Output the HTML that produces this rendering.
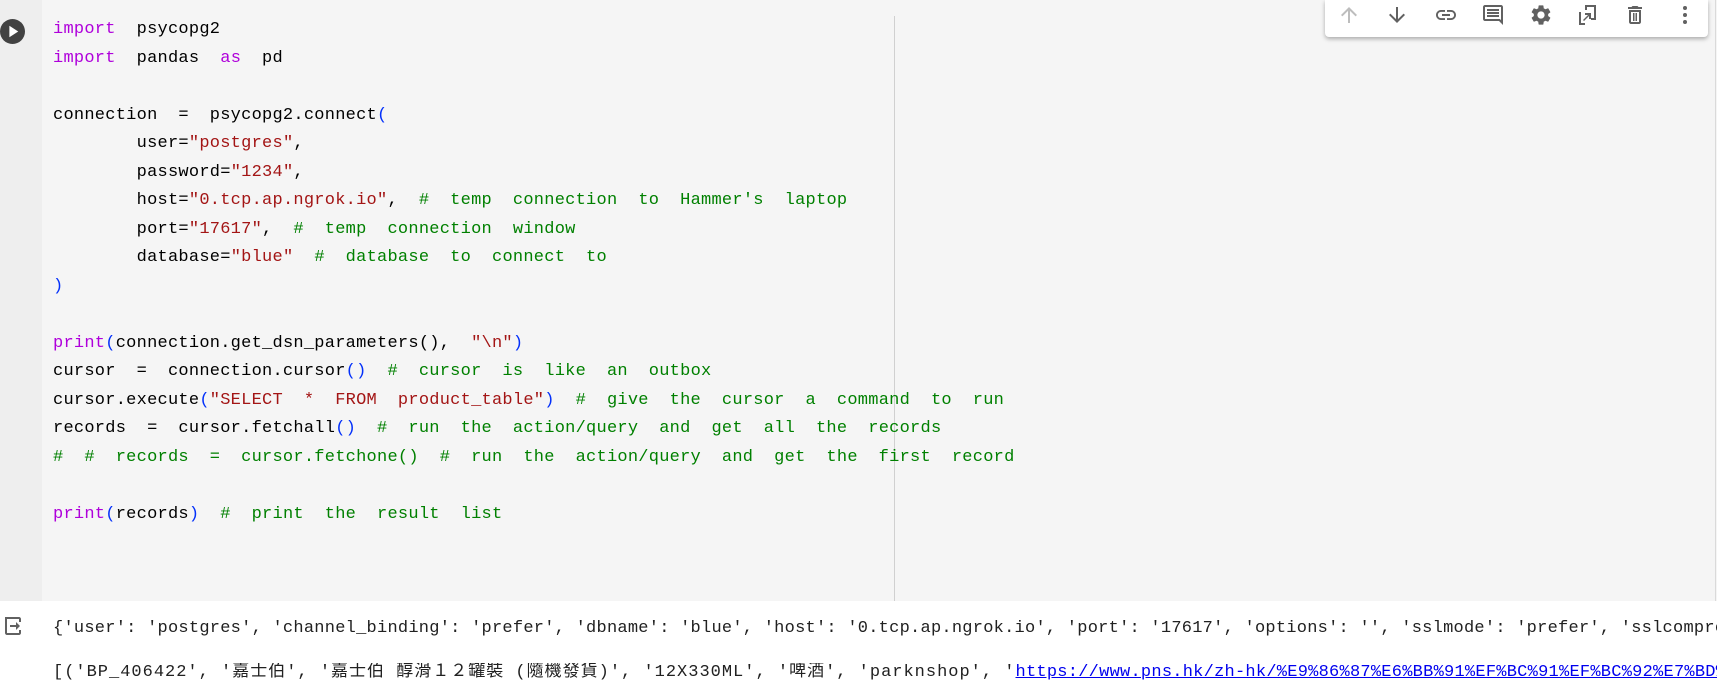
<!DOCTYPE html>
<html><head><meta charset="utf-8"><style>
html,body{margin:0;padding:0;width:1717px;height:690px;overflow:hidden;background:#fff;position:relative}
.cell{position:absolute;left:0;top:0;width:1717px;height:601px;background:#f5f5f5}
.gut{position:absolute;left:0;top:0;width:42px;height:601px;background:#eeeeee}
.vl{position:absolute;left:894px;top:16px;width:1px;height:585px;background:#d0d0d0}
.rb{position:absolute;left:1715px;top:0;width:1px;height:601px;background:#dadada}
pre{margin:0;position:absolute;font-family:"Liberation Mono","Noto Sans CJK TC",monospace;font-size:17px;letter-spacing:0.25px;white-space:pre;color:#000}
.code{left:53px;top:16px;line-height:28.5px}
.k{color:#af00db}.s{color:#a31515}.c{color:#008000}.p{color:#0431fa}
.tb{position:absolute;left:1325px;top:0;width:383px;height:37px;background:#fff;border-radius:0 0 4px 4px;box-shadow:0 2px 4px rgba(0,0,0,.3)}
.tb svg{position:absolute;top:3px;width:24px;height:24px;fill:#616161}
.out{left:53px;color:#212121;line-height:20px;width:1664px;overflow:hidden}
a{color:#0000ee;text-decoration:underline}
.wide{letter-spacing:1px}
</style></head><body>
<div class="cell"></div><div class="gut"></div><div class="vl"></div><div class="rb"></div>
<svg style="position:absolute;left:0;top:19px" width="25" height="25" viewBox="0 0 24 24"><circle cx="12" cy="12" r="12" fill="#424242"/><path d="M9 6.5v11l8.5-5.5z" fill="#fff"/></svg>
<pre class="code"><span class="k">import</span>  psycopg2
<span class="k">import</span>  pandas  <span class="k">as</span>  pd

connection  =  psycopg2.connect<span class="p">(</span>
        user=<span class="s">"postgres"</span>,
        password=<span class="s">"1234"</span>,
        host=<span class="s">"0.tcp.ap.ngrok.io"</span>,  <span class="c">#  temp  connection  to  Hammer's  laptop</span>
        port=<span class="s">"17617"</span>,  <span class="c">#  temp  connection  window</span>
        database=<span class="s">"blue"</span>  <span class="c">#  database  to  connect  to</span>
<span class="p">)</span>

<span class="k">print</span><span class="p">(</span>connection.get_dsn_parameters(),  <span class="s">"\n"</span><span class="p">)</span>
cursor  =  connection.cursor<span class="p">()</span>  <span class="c">#  cursor  is  like  an  outbox</span>
cursor.execute<span class="p">(</span><span class="s">"SELECT  *  FROM  product_table"</span><span class="p">)</span>  <span class="c">#  give  the  cursor  a  command  to  run</span>
records  =  cursor.fetchall<span class="p">()</span>  <span class="c">#  run  the  action/query  and  get  all  the  records</span>
<span class="c">#  #  records  =  cursor.fetchone()  #  run  the  action/query  and  get  the  first  record</span>

<span class="k">print</span><span class="p">(</span>records<span class="p">)</span>  <span class="c">#  print  the  result  list</span></pre>
<div class="tb">
<svg style="left:12px" viewBox="0 0 24 24"><path fill="#bdbdbd" d="M4 12l1.41 1.41L11 7.83V20h2V7.83l5.58 5.59L20 12l-8-8-8 8z"/></svg>
<svg style="left:60px" viewBox="0 0 24 24"><path d="M20 12l-1.41-1.41L13 16.17V4h-2v12.17l-5.58-5.59L4 12l8 8 8-8z"/></svg>
<svg style="left:109px" viewBox="0 0 24 24"><path d="M3.9 12c0-1.710 1.39-3.1 3.1-3.1h4V7H7c-2.76 0-5 2.24-5 5s2.24 5 5 5h4v-1.9H7c-1.71 0-3.1-1.39-3.1-3.1zM8 13h8v-2H8v2zm9-6h-4v1.9h4c1.71 0 3.1 1.39 3.1 3.1s-1.39 3.1-3.1 3.1h-4V17h4c2.76 0 5-2.24 5-5s-2.24-5-5-5z"/></svg>
<svg style="left:156px" viewBox="0 0 24 24"><path d="M21.99 4c0-1.1-.89-2-1.99-2H4c-1.1 0-2 .9-2 2v12c0 1.1.9 2 2 2h14l4 4-.01-18zM20 4v13.17L18.83 16H4V4h16zM6 12h12v2H6zm0-3h12v2H6zm0-3h12v2H6z"/></svg>
<svg style="left:204px" viewBox="0 0 24 24"><path d="M19.14 12.94c.04-.3.06-.61.06-.94 0-.32-.02-.64-.07-.94l2.03-1.58a.49.49 0 00.12-.61l-1.92-3.32a.488.488 0 00-.59-.22l-2.39.96c-.5-.38-1.03-.7-1.62-.94l-.36-2.54a.484.484 0 00-.48-.41h-3.84c-.24 0-.43.17-.47.41l-.36 2.54c-.59.24-1.13.57-1.62.94l-2.39-.96c-.22-.08-.47 0-.59.22L2.74 8.87c-.12.21-.08.47.12.61l2.03 1.58c-.05.3-.09.63-.09.94s.02.64.07.94l-2.03 1.58a.49.49 0 00-.12.61l1.92 3.32c.12.22.37.29.59.22l2.39-.96c.5.38 1.03.7 1.62.94l.36 2.54c.05.24.24.41.48.41h3.84c.24 0 .44-.17.47-.41l.36-2.54c.59-.24 1.13-.56 1.62-.94l2.39.96c.22.08.47 0 .59-.22l1.92-3.32c.12-.22.07-.47-.12-.61l-2.01-1.58zM12 15.6c-1.98 0-3.6-1.62-3.6-3.6s1.62-3.6 3.6-3.6 3.6 1.62 3.6 3.6-1.62 3.6-3.6 3.6z"/></svg>
<svg style="left:251px" viewBox="0 0 24 24"><path d="M9 2h11v15h-5v-2h3V4h-7v3H9zM3 9h2v11h4v2H3zM7 17l5-5h-3v-2h6v6h-2v-3l-5 5z"/></svg>
<svg style="left:298px" viewBox="0 0 24 24"><path d="M6 19c0 1.1.9 2 2 2h8c1.1 0 2-.9 2-2V7H6v12zm2-10h8v10H8V9zm7.5-5l-1-1h-5l-1 1H5v2h14V4zM10 10h1.5v8H10zm2.5 0H14v8h-1.5z"/></svg>
<svg style="left:348px" viewBox="0 0 24 24"><circle cx="12" cy="5" r="2"/><circle cx="12" cy="12" r="2"/><circle cx="12" cy="19" r="2"/></svg>
</div>
<svg style="position:absolute;left:2px;top:614px" width="24" height="24" viewBox="0 0 24 24"><path fill="#616161" d="M3 3h14c1.1 0 2 .9 2 2v3h-2V5H5v14h12v-3h2v3c0 1.1-.9 2-2 2H5c-1.1 0-2-.9-2-2zM14 8l4 4-4 4v-3H8v-2h6z"/></svg>
<pre class="out" style="top:619px">{'user': 'postgres', 'channel_binding': 'prefer', 'dbname': 'blue', 'host': '0.tcp.ap.ngrok.io', 'port': '17617', 'options': '', 'sslmode': 'prefer', 'sslcompression': '0'}</pre>
<pre class="out" style="top:663px"><span class="wide">[('BP_406422', '嘉士伯', '嘉士伯 醇滑１２罐裝 (隨機發貨)', '12X330ML', '啤酒', 'parknshop', '</span><a>https://www.pns.hk/zh-hk/%E9%86%87%E6%BB%91%EF%BC%91%EF%BC%92%E7%BD%90</a></pre>
</body></html>
